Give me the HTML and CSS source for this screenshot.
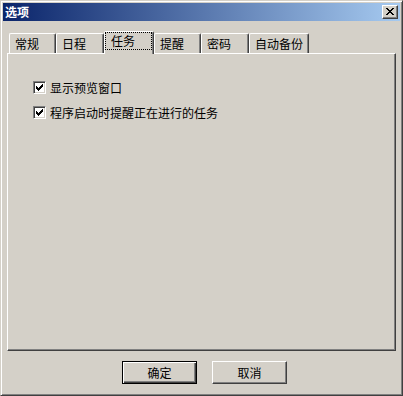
FILE: index.html
```html
<!DOCTYPE html>
<html lang="zh-CN">
<head>
<meta charset="UTF-8" />
<title>选项</title>
<link rel="stylesheet" href="styles.css">
</head>
<body>
  <div class="dialog">
    <div class="titlebar">
      <span class="title">选项</span>
      <button class="close-btn" title="关闭">
        <svg width="8" height="7" viewBox="0 0 8 7" shape-rendering="crispEdges">
          <rect x="0" y="0" width="2" height="1"/><rect x="6" y="0" width="2" height="1"/>
          <rect x="1" y="1" width="2" height="1"/><rect x="5" y="1" width="2" height="1"/>
          <rect x="2" y="2" width="4" height="1"/>
          <rect x="3" y="3" width="2" height="1"/>
          <rect x="2" y="4" width="4" height="1"/>
          <rect x="1" y="5" width="2" height="1"/><rect x="5" y="5" width="2" height="1"/>
          <rect x="0" y="6" width="2" height="1"/><rect x="6" y="6" width="2" height="1"/>
        </svg>
      </button>
    </div>

    <div class="tabs">
      <div class="tab">常规</div>
      <div class="tab tab-2">日程</div>
      <div class="tab tab-selected"><span class="focus">任务</span></div>
      <div class="tab">提醒</div>
      <div class="tab tab-5">密码</div>
      <div class="tab tab-wide">自动备份</div>
    </div>

    <div class="panel">
      <label class="check">
        <span class="box"><svg width="7" height="7" viewBox="0 0 7 7" shape-rendering="crispEdges"><path d="M0 2h1v1h1v1h1V3h1V2h1V1h1V0h1v3H6v1H5v1H4v1H3v1H2V6H1V5H0z"/></svg></span>
        显示预览窗口
      </label>
      <label class="check">
        <span class="box"><svg width="7" height="7" viewBox="0 0 7 7" shape-rendering="crispEdges"><path d="M0 2h1v1h1v1h1V3h1V2h1V1h1V0h1v3H6v1H5v1H4v1H3v1H2V6H1V5H0z"/></svg></span>
        程序启动时提醒正在进行的任务
      </label>
    </div>

    <div class="buttons">
      <button class="btn btn-default">确定</button>
      <button class="btn">取消</button>
    </div>
  </div>
</body>
</html>
```

FILE: styles.css
```css
body {
  margin: 0;
  font-family: "Noto Sans CJK SC", "Liberation Sans", sans-serif;
  font-size: 12px;
  color: #000;
  background: #d4d0c8;
}
.dialog {
  width: 403px;
  height: 396px;
  box-sizing: border-box;
  background: #d4d0c8;
  border: 1px solid;
  border-color: #d4d0c8 #404040 #404040 #d4d0c8;
  box-shadow: inset 1px 1px #fff, inset -1px -1px #808080;
  padding: 2px;
  display: flex;
  flex-direction: column;
}
.titlebar {
  height: 18px;
  display: flex;
  align-items: center;
  justify-content: space-between;
  padding: 0 2px;
  background: linear-gradient(to right, #0a246a, #a6caf0);
}
.title {
  color: #fff;
  font-weight: bold;
  line-height: 18px;
}
.close-btn {
  width: 16px;
  height: 14px;
  box-sizing: border-box;
  padding: 2px 0 0 3px;
  background: #d4d0c8;
  border: 1px solid;
  border-color: #fff #404040 #404040 #fff;
  box-shadow: inset -1px -1px #808080;
  display: flex;
  align-items: flex-start;
}
.close-btn svg {
  display: block;
  fill: #000;
}
.tabs {
  display: flex;
  align-items: flex-end;
  height: 22px;
  margin: 10px 0 0 6px;
  position: relative;
  z-index: 1;
}
.tab {
  width: 47px;
  height: 20px;
  box-sizing: border-box;
  border: 1px solid;
  border-bottom: none;
  border-color: #fff #404040 transparent #fff;
  border-radius: 2px 2px 0 0;
  box-shadow: inset -1px 0 #808080;
  padding: 2px 0 0 5px;
  line-height: 16px;
  white-space: nowrap;
}
.tab-2,
.tab-5 {
  width: 48px;
}
.tab-wide {
  width: 60px;
}
.tab-selected {
  width: 50px;
  height: 23px;
  margin-bottom: -1px;
  padding: 0 1px 0 0;
  background: #d4d0c8;
}
.focus {
  display: block;
  height: 18px;
  box-sizing: border-box;
  border: 1px dotted #000;
  padding-left: 5px;
  line-height: 16px;
}
.panel {
  height: 298px;
  box-sizing: border-box;
  margin: 0 4px;
  border: 1px solid;
  border-color: #fff #404040 #404040 #fff;
  box-shadow: inset -1px -1px #808080;
  padding: 25px 0 0 25px;
}
.check {
  display: flex;
  align-items: center;
  gap: 4px;
  height: 16px;
  margin-bottom: 9px;
}
.box {
  width: 13px;
  height: 13px;
  box-sizing: border-box;
  padding: 2px;
  background: #fff;
  border: 1px solid;
  border-color: #808080 #fff #fff #808080;
  box-shadow: inset 1px 1px #404040, inset -1px -1px #d4d0c8;
}
.box svg {
  display: block;
  fill: #000;
}
.buttons {
  display: flex;
  gap: 15px;
  margin-top: 10px;
  padding-left: 119px;
}
.btn {
  width: 75px;
  height: 23px;
  box-sizing: border-box;
  padding: 0;
  font: inherit;
  color: #000;
  background: #d4d0c8;
  border: 1px solid;
  border-color: #fff #404040 #404040 #fff;
  box-shadow: inset -1px -1px #808080;
}
.btn-default {
  border-color: #000;
  box-shadow: inset 1px 1px #fff, inset -1px -1px #404040, inset -2px -2px #808080;
}
```
